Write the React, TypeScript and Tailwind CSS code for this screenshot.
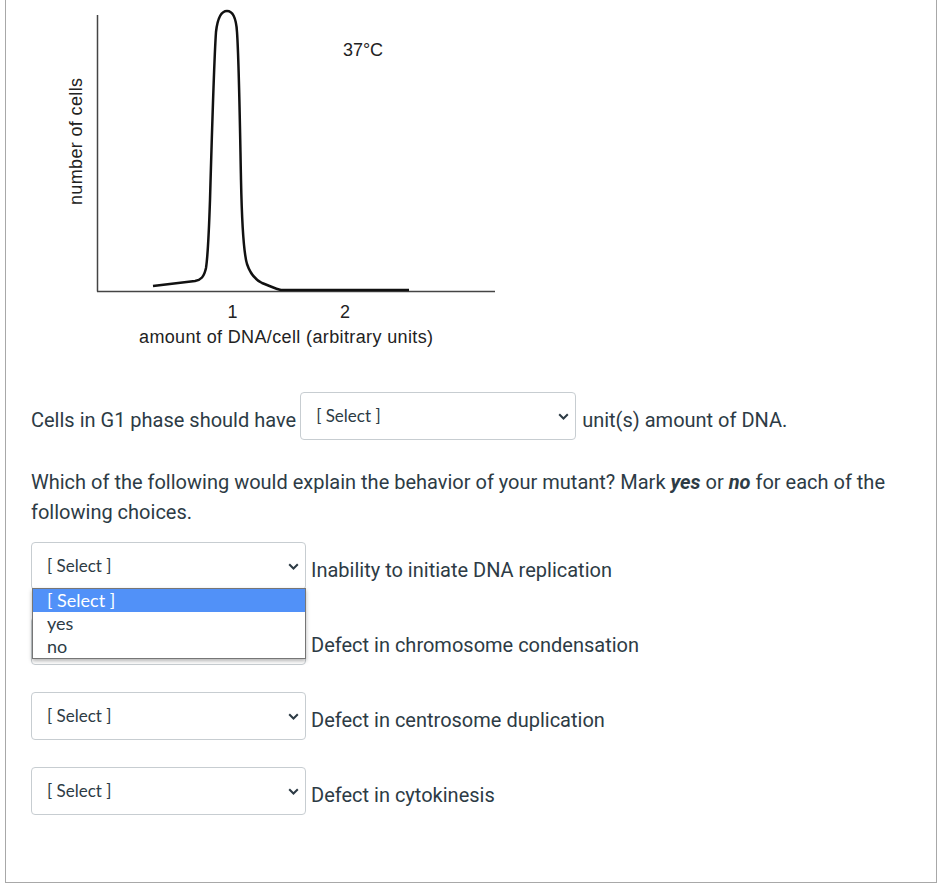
import React from "react";

const rows = [
  "Inability to initiate DNA replication",
  "Defect in chromosome condensation",
  "Defect in centrosome duplication",
  "Defect in cytokinesis",
];

function Chevron() {
  return (
    <svg width="11" height="7" viewBox="0 0 11 7" className="shrink-0">
      <path d="M1.2 1.2 L5.5 5.5 L9.8 1.2" fill="none" stroke="#2d3b45" strokeWidth="2" />
    </svg>
  );
}

function FakeSelect({ width }: { width: string }) {
  return (
    <div
      className={`${width} h-[48px] shrink-0 border border-[#c7cdd1] rounded-[4px] bg-white flex items-center justify-between pl-[15px] pr-[6px] text-[17px] text-[#2d3b45] font-['Lato',sans-serif]`}
    >
      <span className="-mt-[1px]">[ Select ]</span>
      <Chevron />
    </div>
  );
}

function FlowChart() {
  return (
    <svg width="510" height="350" viewBox="6 0 510 350" className="block">
      <line x1="97.5" y1="15" x2="97.5" y2="291.5" stroke="#444" strokeWidth="1.5" />
      <line x1="97" y1="291.5" x2="495" y2="291.5" stroke="#444" strokeWidth="1.5" />
      <path
        d="M153 286 L195 281 C201 280 204 277 206 268 C208 255 209 230 210 200 C212 130 214 60 216 32 C218 14 223 11 227 11 C232 11 236 15 237 32 C239 60 240 130 241 180 C242 228 244 254 247 264 C250 273 254 279 262 283 C270 286 276 289 281 290 L409 290"
        fill="none"
        stroke="#111"
        strokeWidth="2.5"
        strokeLinejoin="round"
      />
      <g fill="#222" fontFamily="'Liberation Sans', Arial, sans-serif" fontSize="18">
        <text x="343" y="56" textLength="40">37°C</text>
        <text x="227.5" y="318">1</text>
        <text x="340" y="318">2</text>
        <text x="139" y="343" textLength="294">amount of DNA/cell (arbitrary units)</text>
        <text x="0" y="0" textLength="127" transform="translate(82 205) rotate(-90)">
          number of cells
        </text>
      </g>
    </svg>
  );
}

export default function App() {
  return (
    <div className="bg-white min-h-screen">
      <div className="ml-[5px] w-[932px] border-x border-b border-[#a8a8a8] pb-[67px] text-[20px] text-[#2d3b45] font-['Roboto',sans-serif]">
        <FlowChart />

        <div className="pl-[25px]">
          <div className="mt-[42px] flex items-start">
            <span className="mt-[14px] leading-[28px]">Cells in G1 phase should have</span>
            <div className="ml-[4px]">
              <FakeSelect width="w-[276px]" />
            </div>
            <span className="ml-[6px] mt-[14px] leading-[28px]">unit(s) amount of DNA.</span>
          </div>

          <p className="mt-[27px] leading-[30px] pr-[20px]">
            Which of the following would explain the behavior of your mutant? Mark <strong className="italic font-bold">yes</strong> or <strong className="italic font-bold">no</strong> for each of the following choices.
          </p>

          <div className="mt-[15px] flex flex-col gap-[27px]">
            {rows.map((label, i) => (
              <div key={label} className="relative flex items-start">
                <FakeSelect width="w-[275px]" />
                <span className="ml-[5px] mt-[14px] leading-[28px]">{label}</span>
                {i === 0 && (
                  <div className="absolute left-[1px] top-[46px] z-10 w-[274px] border border-[#767676] bg-white shadow-[0_2px_4px_rgba(0,0,0,0.3)] text-[18px] font-['Lato',sans-serif] text-[#2d3b45]">
                    <div className="h-[23px] leading-[23px] pl-[14px] bg-[#5191f8] text-white">[ Select ]</div>
                    <div className="h-[23px] leading-[23px] pl-[14px]">yes</div>
                    <div className="h-[23px] leading-[23px] pl-[14px]">no</div>
                  </div>
                )}
              </div>
            ))}
          </div>
        </div>
      </div>
    </div>
  );
}
